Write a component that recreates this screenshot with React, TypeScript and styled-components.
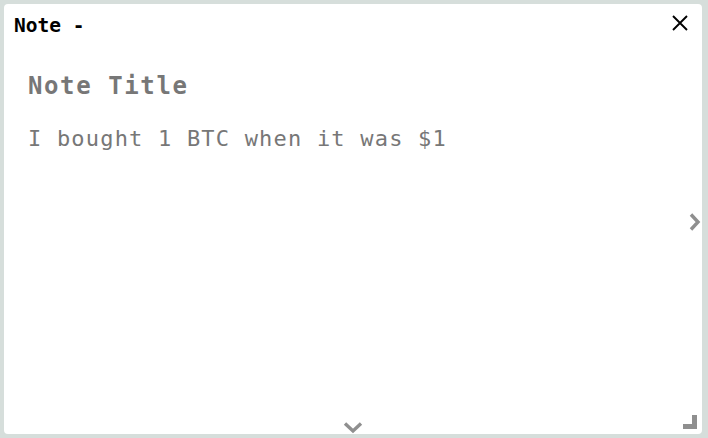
import styled, { createGlobalStyle } from 'styled-components';

const GlobalStyle = createGlobalStyle`
  html, body {
    margin: 0;
    padding: 0;
    background: #d6dedb;
  }
  #root {
    height: 438px;
  }
`;

function App() {
  return (
    <>
      <GlobalStyle />
      <StyledPage>
        <StyledCard>
          <StyledHeader>
            <span>Note -</span>
            <CloseButton aria-label="close">
              <svg width="18" height="18" viewBox="0 0 18 18">
                <path d="M2 2 L16 16 M16 2 L2 16" stroke="#000" strokeWidth="1.9" fill="none" />
              </svg>
            </CloseButton>
          </StyledHeader>
          <StyledBody>
            <NoteTitle>Note Title</NoteTitle>
            <NoteText>I bought 1 BTC when it was $1</NoteText>
          </StyledBody>
          <Chevron $side="right">
            <svg width="14" height="20" viewBox="0 0 14 20">
              <path d="M3 2.5 L10 10 L3 17.5" stroke="#8f8f8f" strokeWidth="3.4" fill="none" />
            </svg>
          </Chevron>
          <Chevron $side="bottom">
            <svg width="20" height="13" viewBox="0 0 20 13">
              <path d="M2 2.5 L10 10 L18 2.5" stroke="#8f8f8f" strokeWidth="3.4" fill="none" />
            </svg>
          </Chevron>
          <ResizeGrip />
        </StyledCard>
      </StyledPage>
    </>
  );
}

export default App;

const StyledPage = styled.div`
  height: 100%;
  box-sizing: border-box;
  padding: 4px 6px 4px 4px;
  display: flex;
`;

const StyledCard = styled.div`
  position: relative;
  flex: 1;
  display: flex;
  flex-direction: column;
  background: #fff;
  border-radius: 4px;
  overflow: hidden;
`;

const StyledHeader = styled.div`
  display: flex;
  align-items: center;
  justify-content: space-between;
  padding: 8px 13px 0 10px;
  height: 26px;

  span {
    font-family: 'DejaVu Sans Mono', monospace;
    font-weight: bold;
    font-size: 19.5px;
    color: #000;
  }
`;

const CloseButton = styled.button`
  all: unset;
  display: flex;
  align-items: center;
  margin-top: -4px;
`;

const StyledBody = styled.div`
  display: flex;
  flex-direction: column;
  gap: 26px;
  padding: 34px 24px 0;
`;

const NoteTitle = styled.h1`
  margin: 0;
  font-family: 'DejaVu Sans Mono', monospace;
  font-weight: bold;
  font-size: 24px;
  letter-spacing: 1.6px;
  color: #777;
`;

const NoteText = styled.p`
  margin: 0;
  font-family: 'DejaVu Sans Mono', monospace;
  font-size: 22px;
  letter-spacing: 1.2px;
  color: #777;
`;

const Chevron = styled.div<{ $side: 'right' | 'bottom' }>`
  position: absolute;
  display: flex;
  ${({ $side }) =>
    $side === 'right'
      ? `right: 0; top: 208px;`
      : `bottom: 0; left: 339px;`}
`;

const ResizeGrip = styled.div`
  position: absolute;
  right: 5px;
  bottom: 5px;
  width: 14px;
  height: 14px;
  border-right: 5px solid #8f8f8f;
  border-bottom: 5px solid #8f8f8f;
  box-sizing: border-box;
`;
